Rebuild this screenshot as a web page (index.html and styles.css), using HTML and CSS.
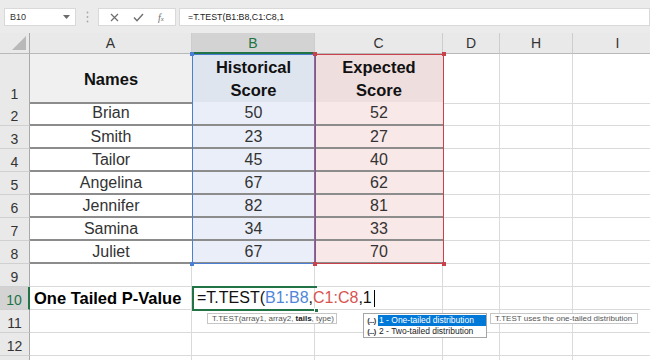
FILE: index.html
```html
<!DOCTYPE html>
<html lang="en">
<head>
  <meta charset="UTF-8">
  <title>T.TEST one tailed</title>
  <link rel="stylesheet" href="styles.css">
</head>
<body>
  <div class="app">
    <div class="formula-bar">
      <div class="name-box">
        <span>B10</span>
        <svg width="7" height="4" viewBox="0 0 7 4"><path d="M0 0h7L3.5 4z" fill="#6b6b6b"/></svg>
      </div>
      <div class="grip">
        <svg width="3" height="12" viewBox="0 0 3 12"><circle cx="1.5" cy="1.5" r="0.9" fill="#a8a8a8"/><circle cx="1.5" cy="6" r="0.9" fill="#a8a8a8"/><circle cx="1.5" cy="10.5" r="0.9" fill="#a8a8a8"/></svg>
      </div>
      <div class="fx-tools">
        <svg width="9" height="9" viewBox="0 0 9 9"><path d="M1 1l7 7M8 1L1 8" stroke="#6e6e6e" stroke-width="1.2" fill="none"/></svg>
        <svg width="11" height="9" viewBox="0 0 11 9"><path d="M1 4.5l3 3.2L10 1" stroke="#6e6e6e" stroke-width="1.4" fill="none"/></svg>
        <span class="fx">f<small>x</small></span>
      </div>
      <div class="formula-input">=T.TEST(B1:B8,C1:C8,1</div>
    </div>

    <div class="sheet">
      <div class="row h-col">
        <div class="ch corner"><span class="tri"></span></div>
        <div class="ch">A</div>
        <div class="ch sel">B</div>
        <div class="ch">C</div>
        <div class="ch">D</div>
        <div class="ch">H</div>
        <div class="ch">I</div>
      </div>

      <div class="row h-48">
        <div class="rh">1</div>
        <div class="c t head a-head">Names</div>
        <div class="c t head b-head">Historical<br>Score</div>
        <div class="c t head c-head">Expected<br>Score</div>
        <div class="c"></div><div class="c"></div><div class="c"></div>
      </div>
      <div class="row h-24">
        <div class="rh">2</div>
        <div class="c t">Brian</div><div class="c t b-cell">50</div><div class="c t c-cell">52</div>
        <div class="c"></div><div class="c"></div><div class="c"></div>
      </div>
      <div class="row">
        <div class="rh">3</div>
        <div class="c t">Smith</div><div class="c t b-cell">23</div><div class="c t c-cell">27</div>
        <div class="c"></div><div class="c"></div><div class="c"></div>
      </div>
      <div class="row">
        <div class="rh">4</div>
        <div class="c t">Tailor</div><div class="c t b-cell">45</div><div class="c t c-cell">40</div>
        <div class="c"></div><div class="c"></div><div class="c"></div>
      </div>
      <div class="row">
        <div class="rh">5</div>
        <div class="c t">Angelina</div><div class="c t b-cell">67</div><div class="c t c-cell">62</div>
        <div class="c"></div><div class="c"></div><div class="c"></div>
      </div>
      <div class="row">
        <div class="rh">6</div>
        <div class="c t">Jennifer</div><div class="c t b-cell">82</div><div class="c t c-cell">81</div>
        <div class="c"></div><div class="c"></div><div class="c"></div>
      </div>
      <div class="row">
        <div class="rh">7</div>
        <div class="c t">Samina</div><div class="c t b-cell">34</div><div class="c t c-cell">33</div>
        <div class="c"></div><div class="c"></div><div class="c"></div>
      </div>
      <div class="row">
        <div class="rh">8</div>
        <div class="c t">Juliet</div><div class="c t b-cell">67</div><div class="c t c-cell">70</div>
        <div class="c"></div><div class="c"></div><div class="c"></div>
      </div>
      <div class="row">
        <div class="rh">9</div>
        <div class="c"></div><div class="c"></div><div class="c"></div>
        <div class="c"></div><div class="c"></div><div class="c"></div>
      </div>
      <div class="row">
        <div class="rh sel">10</div>
        <div class="c label">One Tailed P-Value</div>
        <div class="c edit">
          <span>=T.TEST(<span class="ref-b">B1:B8</span>,<span class="ref-c">C1:C8</span>,1</span><span class="cursor"></span>
        </div>
        <div class="c"></div>
        <div class="c"></div><div class="c"></div><div class="c"></div>
      </div>
      <div class="row">
        <div class="rh">11</div>
        <div class="c"></div><div class="c"></div><div class="c"></div>
        <div class="c"></div><div class="c"></div><div class="c"></div>
      </div>
      <div class="row">
        <div class="rh">12</div>
        <div class="c"></div><div class="c"></div><div class="c"></div>
        <div class="c"></div><div class="c"></div><div class="c"></div>
      </div>
      <div class="row">
        <div class="rh"></div>
        <div class="c"></div><div class="c"></div><div class="c"></div>
        <div class="c"></div><div class="c"></div><div class="c"></div>
      </div>

      <!-- range highlights and edit popups -->
      <div class="range range-b">
        <span class="hd tl"></span><span class="hd bl"></span>
      </div>
      <div class="range range-c">
        <span class="hd tl"></span><span class="hd tr"></span>
        <span class="hd bl"></span><span class="hd br"></span>
      </div>
      <div class="active-box"><span class="fill-handle"></span></div>

      <div class="tip tip-args">T.TEST(array1, array2, <b>tails</b>, type)</div>
      <div class="dropdown">
        <div class="opt on"><span class="ico">(...)</span><span class="txt">1 - One-tailed distribution</span></div>
        <div class="opt"><span class="ico">(...)</span><span class="txt">2 - Two-tailed distribution</span></div>
      </div>
      <div class="tip tip-desc">T.TEST uses the one-tailed distribution</div>
    </div>
  </div>
</body>
</html>
```

FILE: styles.css
```css
body {
  margin: 0;
  font-family: "Liberation Sans", Arial, sans-serif;
  background: #fff;
  overflow: hidden;
}
.app {
  width: 650px;
  height: 360px;
  overflow: hidden;
}

/* formula bar */
.formula-bar {
  height: 33px;
  box-sizing: border-box;
  padding: 8px 0 0 4px;
  background: #ebebeb;
  display: flex;
  align-items: flex-start;
}
.name-box,
.fx-tools,
.formula-input {
  height: 18px;
  box-sizing: border-box;
  background: #fff;
  border: 1px solid #d9d9d9;
}
.name-box {
  width: 72px;
  display: flex;
  align-items: center;
  justify-content: space-between;
  padding: 0 5px 0 5px;
  font-size: 9px;
  color: #333;
}
.grip {
  width: 22px;
  height: 18px;
  display: flex;
  align-items: center;
  justify-content: center;
}
.fx-tools {
  width: 78px;
  display: flex;
  align-items: center;
  justify-content: space-around;
  padding: 0 4px;
}
.fx {
  font-family: "Liberation Serif", serif;
  font-style: italic;
  font-size: 10px;
  color: #6e6e6e;
}
.fx small {
  font-size: 7px;
}
.formula-input {
  flex: 1;
  margin-left: 3px;
  padding-left: 8px;
  font-size: 8.8px;
  line-height: 16px;
  color: #222;
}

/* sheet grid */
.sheet {
  position: relative;
}
.row {
  display: grid;
  grid-template-columns: 30px 162px 123px 128px 57px 73px 90px;
  height: 23px;
}
.row.h-col { height: 21px; }
.row.h-48 { height: 48px; }
.row.h-24 { height: 24px; }

.ch {
  background: #e9e9e9;
  border-right: 1px solid #cdcdcd;
  border-bottom: 1px solid #b9b9b9;
  box-sizing: border-box;
  display: flex;
  align-items: center;
  justify-content: center;
  font-size: 14px;
  color: #333;
}
.ch.sel {
  background: #d3d3d3;
  color: #217346;
  border-bottom: 2px solid #217346;
}
.corner {
  justify-content: flex-end;
  align-items: flex-end;
  padding: 0 3px 3px 0;
  border-right-color: #a9a9a9;
}
.tri {
  width: 0;
  height: 0;
  border-left: 14px solid transparent;
  border-bottom: 14px solid #b9b9b9;
}
.rh {
  background: #e9e9e9;
  border-right: 1px solid #a9a9a9;
  border-bottom: 1px solid #d0d0d0;
  box-sizing: border-box;
  display: flex;
  align-items: flex-end;
  justify-content: center;
  padding-bottom: 1px;
  font-size: 14px;
  color: #333;
}
.rh.sel {
  background: #d3d3d3;
  color: #217346;
  border-right: 2px solid #217346;
}

.c {
  border-right: 1px solid #dadada;
  border-bottom: 1px solid #dadada;
  box-sizing: border-box;
  display: flex;
  align-items: center;
  justify-content: center;
  font-size: 16px;
  color: #333;
  white-space: nowrap;
}
.c.t {
  border-right: none;
  border-bottom: 2px solid #8c8c8c;
}
.head {
  flex-direction: column;
  font-weight: bold;
  font-size: 16.5px;
  line-height: 23px;
  padding-top: 2px;
  color: #111;
  text-align: center;
}
.a-head { background: #f0f0f0; }
.b-head { background: #dfe5ef; }
.c-head { background: #efdede; }
.b-cell { background: #e9eef8; }
.c-cell { background: #f9e8e8; }

.label {
  justify-content: flex-start;
  padding-left: 4px;
  font-weight: bold;
  font-size: 16.5px;
  color: #000;
}
.edit {
  justify-content: flex-start;
  padding-left: 5px;
  color: #111;
  overflow: visible;
}
.ref-b { color: #4f86d9; }
.ref-c { color: #d9534f; }
.cursor {
  display: inline-block;
  width: 0;
  height: 17px;
  margin-left: 2px;
  border-right: 1px solid #000;
}

/* overlays */
.range {
  position: absolute;
  top: 21px;
  height: 210px;
  box-sizing: border-box;
}
.range-b {
  left: 192px;
  width: 123px;
  border: 1px solid #4a7fd4;
}
.range-c {
  left: 315px;
  width: 129px;
  border: 1px solid #c9414a;
}
.hd {
  position: absolute;
  width: 4px;
  height: 4px;
}
.range-b .hd { background: #4a7fd4; }
.range-c .hd { background: #c9414a; }
.hd.tl { left: -3px; top: -3px; }
.hd.tr { right: -3px; top: -3px; }
.hd.bl { left: -3px; bottom: -3px; }
.hd.br { right: -3px; bottom: -3px; }

.active-box {
  position: absolute;
  left: 192px;
  top: 253px;
  width: 125px;
  height: 25px;
  box-sizing: border-box;
  border: 2px solid #217346;
  border-right: none;
}
.fill-handle {
  position: absolute;
  right: -2px;
  bottom: -4px;
  width: 5px;
  height: 5px;
  background: #217346;
  border: 1px solid #fff;
  box-sizing: border-box;
}

.tip {
  position: absolute;
  top: 280px;
  height: 11px;
  box-sizing: border-box;
  background: #fff;
  border: 1px solid #c6c6c6;
  font-size: 8px;
  line-height: 9px;
  color: #555;
  padding: 0 4px;
  white-space: nowrap;
}
.tip b { color: #222; }
.tip-args { left: 207px; width: 130px; }
.tip-desc { left: 490px; width: 148px; }

.dropdown {
  position: absolute;
  left: 363px;
  top: 280px;
  width: 124px;
  height: 25px;
  box-sizing: border-box;
  background: #fff;
  border: 1px solid #a6a6a6;
  padding: 1px 0 0 1px;
}
.opt {
  display: flex;
  align-items: center;
  height: 11px;
  font-size: 8.5px;
  color: #222;
  white-space: nowrap;
}
.ico {
  width: 13px;
  font-size: 7.5px;
  font-weight: bold;
  letter-spacing: -0.5px;
  color: #333;
  text-align: center;
}
.txt {
  flex: 1;
  height: 11px;
  line-height: 11px;
  padding-left: 1px;
}
.opt.on .txt {
  background: #0078d7;
  color: #fff;
}
```
